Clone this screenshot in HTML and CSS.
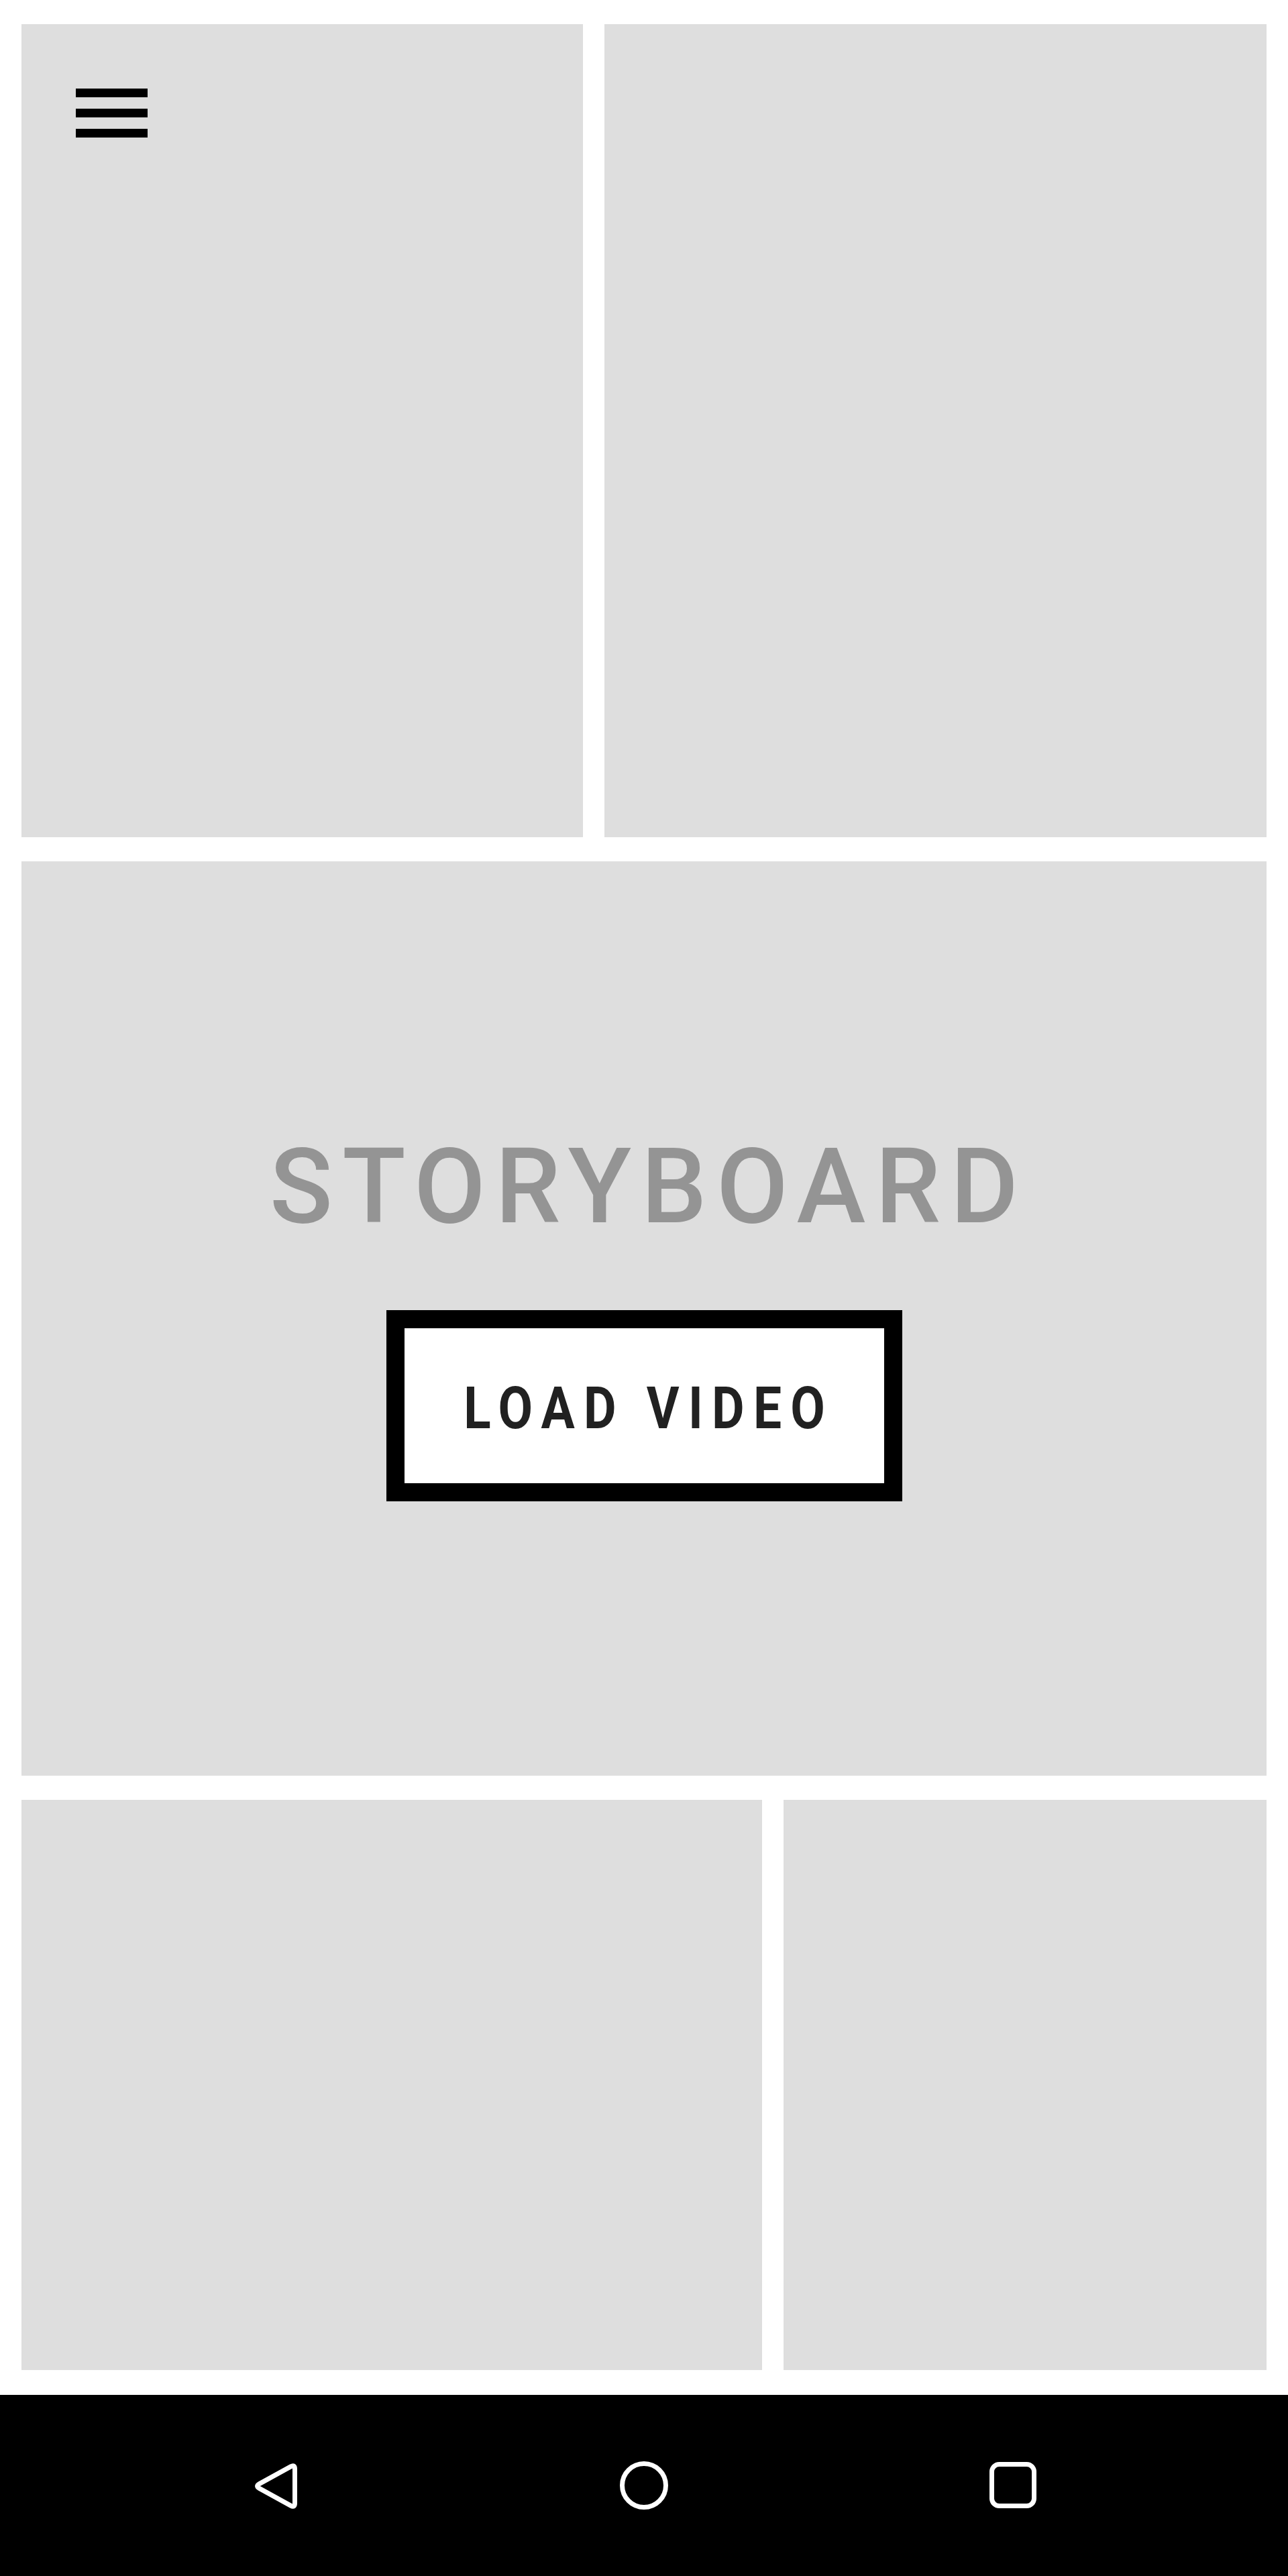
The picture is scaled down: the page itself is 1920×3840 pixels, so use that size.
FILE: index.html
```html
<!DOCTYPE html>
<html lang="en">
<head>
<meta charset="utf-8">
<title>Storyboard</title>
<link rel="stylesheet" href="styles.css">
</head>
<body>
<div class="page">
  <main class="board">
    <div class="row row-top">
      <section class="panel panel-tl">
        <button class="menu" aria-label="Menu">
          <span class="bar"></span>
          <span class="bar"></span>
          <span class="bar"></span>
        </button>
      </section>
      <section class="panel panel-tr"></section>
    </div>
    <section class="panel panel-mid">
      <h1 class="title">STORYBOARD</h1>
      <button class="load"><span class="load-label">LOAD VIDEO</span></button>
    </section>
    <div class="row row-bottom">
      <section class="panel panel-bl"></section>
      <section class="panel panel-br"></section>
    </div>
  </main>
  <nav class="navbar">
    <svg class="nav-icon" viewBox="0 0 72 72" width="72" height="72" aria-label="Back">
      <path d="M12.6 33.6 L59.4 7.9 Q65.5 4.5 65.5 11.5 L65.5 62.5 Q65.5 69.5 59.4 66.1 L12.6 40.4 Q6.5 37 12.6 33.6 Z" fill="none" stroke="#fff" stroke-width="7" stroke-linejoin="round"/>
    </svg>
    <svg class="nav-icon" viewBox="0 0 72 72" width="72" height="72" aria-label="Home">
      <circle cx="36" cy="36" r="32.5" fill="none" stroke="#fff" stroke-width="7"/>
    </svg>
    <svg class="nav-icon" viewBox="0 0 72 72" width="72" height="72" aria-label="Recents">
      <rect x="4.5" y="4.5" width="63" height="62" rx="11" fill="none" stroke="#fff" stroke-width="7"/>
    </svg>
  </nav>
</div>
</body>
</html>
```

FILE: styles.css
```css
* { box-sizing: border-box; }
html, body { margin: 0; padding: 0; background: #ffffff; }
body { font-family: Roboto, "Liberation Sans", sans-serif; }

.page {
  display: flex;
  flex-direction: column;
  height: 3840px;
  width: 1920px;
}

.board {
  flex: 1;
  display: flex;
  flex-direction: column;
  gap: 36px;
  padding: 36px 32px 37px;
}

.row {
  display: flex;
  gap: 32px;
}

.row-top { height: 1212px; }
.row-bottom { height: 850px; }

.panel { background: #dedede; }

.panel-tl { flex: 0 0 837px; padding: 96px 0 0 81px; }
.panel-tr { flex: 1; }
.panel-bl { flex: 0 0 1104px; }
.panel-br { flex: 1; }

.menu {
  display: flex;
  flex-direction: column;
  gap: 17.5px;
  width: 107px;
  padding: 0;
  margin: 0;
  border: 0;
  background: transparent;
}
.bar {
  display: block;
  height: 12.5px;
  width: 107px;
  background: #000;
}

.panel-mid {
  height: 1363px;
  display: flex;
  flex-direction: column;
  align-items: center;
  padding-top: 408px;
}

.title {
  margin: 0;
  font-size: 155px;
  line-height: 155px;
  font-weight: 500;
  color: #949494;
  letter-spacing: 14.4px;
  padding-left: 14.4px;
}

.load {
  margin-top: 106px;
  width: 769px;
  height: 285px;
  border: 27px solid #000;
  background: #fff;
  padding: 6px 0 0;
  display: flex;
  align-items: center;
  justify-content: center;
}

.load-label {
  display: inline-block;
  font-family: Roboto, "Liberation Sans", sans-serif;
  font-size: 88px;
  line-height: 88px;
  font-weight: 700;
  letter-spacing: 15.6px;
  padding-left: 15.6px;
  color: #212121;
  white-space: nowrap;
  transform: scaleX(0.85);
  transform-origin: center center;
}

.navbar {
  flex: 0 0 270px;
  background: #000;
  display: flex;
  align-items: center;
  justify-content: center;
  gap: 478px;
}

.nav-icon { display: block; }
```
